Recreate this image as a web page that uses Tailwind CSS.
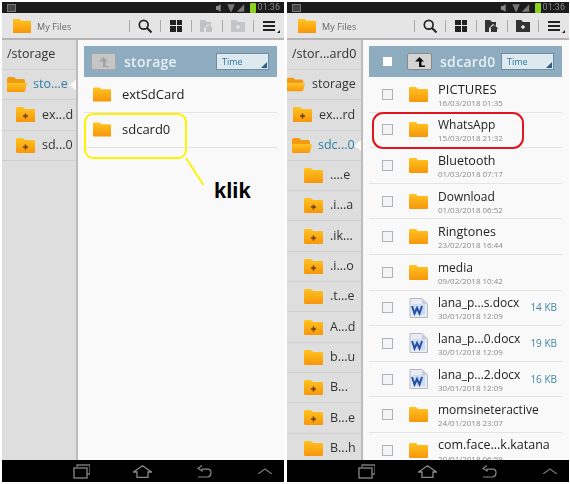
<!DOCTYPE html>
<html><head><meta charset="utf-8"><script src="https://cdn.jsdelivr.net/npm/@tailwindcss/browser@4"></script></head>
<body class="bg-white">
<svg width="0" height="0" class="absolute">
<defs>
<linearGradient id="g" x1="0" y1="0" x2="0" y2="1"><stop offset="0" stop-color="#ffc421"/><stop offset="1" stop-color="#f7960a"/></linearGradient>
<symbol id="f" viewBox="0 0 19 15"><path d="M0 1 Q0 0 1 0H7L9 2H18Q19 2 19 3V14Q19 15 18 15H1Q0 15 0 14Z" fill="url(#g)"/></symbol>
<symbol id="fp" viewBox="0 0 19 15"><path d="M0 1 Q0 0 1 0H7L9 2H18Q19 2 19 3V14Q19 15 18 15H1Q0 15 0 14Z" fill="url(#g)"/><path d="M7 9H12M9.500 6.500V11.500" stroke="#6b3f00" stroke-width="1.500"/></symbol>
<symbol id="fo" viewBox="0 0 20 15"><path d="M0 1.500 Q0 0 2 0H7L9 2H16Q18 2 18 4V6H0Z" fill="#f39a12"/><path d="M0 6H20L18 14Q18 15 16 15H1Q0 15 0 14Z" fill="url(#g)"/></symbol>
<symbol id="w" viewBox="0 0 19 20"><path d="M1 0.500H13L18.500 6V19.500H1Z" fill="#e9ecf2" stroke="#b4b9c4"/><path d="M13 0.500V6H18.500" fill="#c4ccda"/><rect x="4" y="6" width="12" height="11" fill="#cddcf2"/><path d="M3 8L5.500 15.500L8 10L10.500 15.500L13 8" fill="none" stroke="#2450a8" stroke-width="2"/></symbol>
<symbol id="rec" viewBox="0 0 17 15"><path d="M4 3V1H17V10H14" fill="none" stroke="#777" stroke-width="1.300"/><rect x="1" y="4" width="13" height="10" fill="none" stroke="#777" stroke-width="1.500"/></symbol>
<symbol id="hm" viewBox="0 0 19 13"><path d="M0.500 7L9.500 0.800L18.500 7H15V12.500H4V7Z" fill="none" stroke="#888" stroke-width="1.300"/></symbol>
<symbol id="bk" viewBox="0 0 15 13"><path d="M5 0.500L1 3.500L5 6V4.200H11Q14 4.200 14 7.700T11 12H1" fill="none" stroke="#888" stroke-width="1.200"/></symbol>
<symbol id="up" viewBox="0 0 14 6"><path d="M0 6L7 1L14 6" fill="none" stroke="#777" stroke-width="1.200"/></symbol>
<symbol id="status" viewBox="0 0 36 10"><path d="M1 3H3L6 1V9L3 7H1ZM7 3L11 7M11 3L7 7" fill="#8a8a8a"/><path d="M13 1H21L17.500 9H16.500Z" fill="#777"/><path d="M23 9L31 9V1Z" fill="#777"/></symbol>
</defs>
</svg>
<div class="relative w-[570px] h-[484px] overflow-hidden flex gap-[3px] pl-[2px] pt-[2px] font-['Open_Sans',sans-serif]">

<!-- LEFT PHONE -->
<section class="w-[282px] h-[480px] flex flex-col overflow-hidden blur-[0.5px]">
 <div class="h-[11px] shrink-0 bg-[#1b1b1b] flex items-center pl-[5px] pr-[4px]">
  <div class="w-[9px] h-[8px] border border-[#777] bg-[#444]"></div>
  <svg class="ml-auto w-[34px] h-[10px]"><use href="#status"/></svg>
  <div class="w-[6px] h-[10px] ml-[1px] bg-[#8fd21b] rounded-[1px]"></div>
  <span class="ml-[2px] text-[9px] leading-none text-[#8a8a8a] font-['Roboto',sans-serif]">01:36</span>
 </div>
 <div class="h-[27px] shrink-0 bg-[#e5e5e5] border-b-2 border-[#b5b5b5] flex items-center">
  <svg class="ml-[11px] w-[18px] h-[16px]" preserveAspectRatio="none"><use href="#f"/></svg>
  <span class="ml-[6px] pt-[2px] w-[92px] text-[9px] tracking-[0.1px] text-[#666]">My Files</span>
  <div class="w-px h-[12px] bg-[#aaa]"></div>
  <div class="w-[30px] flex justify-center"><svg width="14" height="14" viewBox="0 0 14 14"><circle cx="5.700" cy="5.700" r="4.400" fill="none" stroke="#222" stroke-width="1.700"/><path d="M9 9L13.500 13.500" stroke="#222" stroke-width="2"/></svg></div>
  <div class="w-px h-[12px] bg-[#aaa]"></div>
  <div class="w-[30px] flex justify-center"><div class="grid grid-cols-2 gap-[1px] w-[12px] h-[12px]"><i class="bg-[#222]"></i><i class="bg-[#222]"></i><i class="bg-[#222]"></i><i class="bg-[#222]"></i></div></div>
  <div class="w-px h-[12px] bg-[#aaa]"></div>
  <div class="w-[30px] flex justify-center"><svg width="14" height="12" viewBox="0 0 14 12"><path d="M0 0H5L7 2H11V6L8 4L4 8V12H0Z M5 8L9 5L13.500 8.500H12V12H6V8.500Z" fill="#bfc3c6"/></svg></div>
  <div class="w-px h-[12px] bg-[#aaa]"></div>
  <div class="w-[30px] flex justify-center"><svg width="14" height="12" viewBox="0 0 14 12"><path d="M0 0H5L7 2H14V12H0Z" fill="#c2c6c9"/><path d="M5 7H9M7 5V9" stroke="#e5e5e5" stroke-width="1.500"/></svg></div>
  <div class="w-px h-[12px] bg-[#aaa]"></div>
  <div class="relative w-[29px] flex justify-center"><div class="flex flex-col gap-[2px] w-[12px]"><i class="h-[2px] bg-[#222]"></i><i class="h-[2px] bg-[#222]"></i><i class="h-[2px] bg-[#222]"></i></div><i class="absolute right-[3px] bottom-[-2px] w-0 h-0 border-l-[3px] border-l-transparent border-b-[3px] border-b-[#222]"></i></div>
 </div>
 <div class="flex-1 min-h-0 flex overflow-hidden">
  <aside class="w-[76px] shrink-0 bg-[#dedede] border-r-2 border-[#bdbdbd] text-[12.500px] text-[#333] overflow-hidden">
   <div class="h-[30px] flex items-center pl-[5px] border-b border-[#cfcfcf]">/storage</div>
   <div class="relative h-[30.300px] flex items-center pl-[5px] border-b border-[#cfcfcf] text-[#2d7fa6]"><svg class="w-[20px] h-[15px] mr-[6px]"><use href="#fo"/></svg>sto...e<i class="absolute right-[-1px] top-[9px] w-[8px] h-[12px] bg-[#f9f9f9] [clip-path:polygon(100%_0,0_50%,100%_100%)]"></i></div>
   <div class="h-[30.300px] flex items-center pl-[14px] border-b border-[#cfcfcf]"><svg class="w-[19px] h-[15px] mr-[7px]"><use href="#fp"/></svg>ex...d</div>
   <div class="h-[30.300px] flex items-center pl-[14px] border-b border-[#cfcfcf]"><svg class="w-[19px] h-[15px] mr-[7px]"><use href="#fp"/></svg>sd...0</div>
  </aside>
  <main class="flex-1 min-w-0 bg-[#f9f9f9] pl-[6px] pr-[7px] pt-[6px]">
   <div class="h-[31px] bg-[#8eacc0] flex items-center pl-[7px] pr-[8px]">
    <div class="w-[25px] h-[17px] bg-[#c6c6c6] border border-[#a8a8a8] rounded-[2px] flex justify-center items-center"><svg width="11" height="10" viewBox="0 0 11 10"><path d="M5.500 0L10 4.500H7.500V9H11V10H5V4.500H1Z" fill="#a3a3a3"/></svg></div>
    <span class="ml-[8px] text-[14px] font-semibold text-[#e8f0f4] tracking-[0.3px]">storage</span>
    <div class="relative ml-auto w-[53px] h-[17px] bg-[#dde8ef] border border-[#6f8da3] text-[9px] leading-[15px] pl-[5px] text-[#2f78a8]">Time<i class="absolute right-[1px] bottom-[1px] w-0 h-0 border-l-[6px] border-l-transparent border-b-[6px] border-b-[#2a5f8a]"></i></div>
   </div>
   <div class="h-[35.600px] flex items-center pl-[9px] border-b border-[#e4e4e4]"><svg class="w-[18px] h-[15px] mr-[11px]"><use href="#f"/></svg><span class="text-[13px] text-[#222]">extSdCard</span></div>
   <div class="h-[35.600px] flex items-center pl-[9px] border-b border-[#e4e4e4]"><svg class="w-[18px] h-[15px] mr-[11px]"><use href="#f"/></svg><span class="text-[13px] text-[#222]">sdcard0</span></div>
  </main>
 </div>
 <nav class="h-[22px] shrink-0 bg-black relative flex items-center">
  <svg class="ml-[71px] w-[17px] h-[15px]"><use href="#rec"/></svg>
  <svg class="ml-[43px] w-[19px] h-[13px]"><use href="#hm"/></svg>
  <svg class="ml-[45px] w-[15px] h-[13px]"><use href="#bk"/></svg>
  <svg class="ml-[46px] w-[14px] h-[6px]"><use href="#up"/></svg>
 </nav>
</section>

<!-- RIGHT PHONE -->
<section class="w-[282px] h-[480px] flex flex-col overflow-hidden blur-[0.5px]">
 <div class="h-[11px] shrink-0 bg-[#1b1b1b] flex items-center pl-[5px] pr-[4px]">
  <div class="w-[9px] h-[8px] border border-[#777] bg-[#444]"></div>
  <svg class="ml-auto w-[34px] h-[10px]"><use href="#status"/></svg>
  <div class="w-[6px] h-[10px] ml-[1px] bg-[#8fd21b] rounded-[1px]"></div>
  <span class="ml-[2px] text-[9px] leading-none text-[#8a8a8a] font-['Roboto',sans-serif]">01:36</span>
 </div>
 <div class="h-[27px] shrink-0 bg-[#e5e5e5] border-b-2 border-[#b5b5b5] flex items-center">
  <svg class="ml-[11px] w-[18px] h-[16px]" preserveAspectRatio="none"><use href="#f"/></svg>
  <span class="ml-[6px] pt-[2px] w-[92px] text-[9px] tracking-[0.1px] text-[#666]">My Files</span>
  <div class="w-px h-[12px] bg-[#aaa]"></div>
  <div class="w-[30px] flex justify-center"><svg width="14" height="14" viewBox="0 0 14 14"><circle cx="5.700" cy="5.700" r="4.400" fill="none" stroke="#222" stroke-width="1.700"/><path d="M9 9L13.500 13.500" stroke="#222" stroke-width="2"/></svg></div>
  <div class="w-px h-[12px] bg-[#aaa]"></div>
  <div class="w-[30px] flex justify-center"><div class="grid grid-cols-2 gap-[1px] w-[12px] h-[12px]"><i class="bg-[#222]"></i><i class="bg-[#222]"></i><i class="bg-[#222]"></i><i class="bg-[#222]"></i></div></div>
  <div class="w-px h-[12px] bg-[#aaa]"></div>
  <div class="w-[30px] flex justify-center"><svg width="14" height="12" viewBox="0 0 14 12"><path d="M0 0H5L7 2H11V6L8 4L4 8V12H0Z M5 8L9 5L13.500 8.500H12V12H6V8.500Z" fill="#333"/></svg></div>
  <div class="w-px h-[12px] bg-[#aaa]"></div>
  <div class="w-[30px] flex justify-center"><svg width="14" height="12" viewBox="0 0 14 12"><path d="M0 0H5L7 2H14V12H0Z" fill="#333"/><path d="M5 7H9M7 5V9" stroke="#e5e5e5" stroke-width="1.500"/></svg></div>
  <div class="w-px h-[12px] bg-[#aaa]"></div>
  <div class="relative w-[29px] flex justify-center"><div class="flex flex-col gap-[2px] w-[12px]"><i class="h-[2px] bg-[#222]"></i><i class="h-[2px] bg-[#222]"></i><i class="h-[2px] bg-[#222]"></i></div><i class="absolute right-[3px] bottom-[-2px] w-0 h-0 border-l-[3px] border-l-transparent border-b-[3px] border-b-[#222]"></i></div>
 </div>
 <div class="flex-1 min-h-0 flex overflow-hidden">
  <aside class="w-[76px] shrink-0 bg-[#dedede] border-r-2 border-[#bdbdbd] text-[12.500px] text-[#333] overflow-hidden">
   <div class="h-[30px] flex items-center pl-[5px] border-b border-[#cfcfcf] whitespace-nowrap">/stor...ard0</div>
   <div class="h-[30.300px] flex items-center border-b border-[#cfcfcf]"><svg class="w-[18px] h-[15px] mr-[7px] shrink-0"><use href="#fo"/></svg>storage</div>
   <div class="h-[30.300px] flex items-center pl-[6px] border-b border-[#cfcfcf]"><svg class="w-[19px] h-[15px] mr-[7px]"><use href="#fp"/></svg>ex...rd</div>
   <div class="relative h-[30.300px] flex items-center pl-[5px] border-b border-[#cfcfcf] text-[#2d7fa6]"><svg class="w-[20px] h-[15px] mr-[6px]"><use href="#fo"/></svg>sdc...0<i class="absolute right-[-1px] top-[9px] w-[8px] h-[12px] bg-[#f9f9f9] [clip-path:polygon(100%_0,0_50%,100%_100%)]"></i></div>
   <div class="h-[30.300px] flex items-center pl-[17px] border-b border-[#cfcfcf]"><svg class="w-[19px] h-[15px] mr-[7px]"><use href="#f"/></svg>....e</div>
   <div class="h-[30.300px] flex items-center pl-[17px] border-b border-[#cfcfcf]"><svg class="w-[19px] h-[15px] mr-[7px]"><use href="#fp"/></svg>.i...a</div>
   <div class="h-[30.300px] flex items-center pl-[17px] border-b border-[#cfcfcf]"><svg class="w-[19px] h-[15px] mr-[7px]"><use href="#fp"/></svg>.ik...</div>
   <div class="h-[30.300px] flex items-center pl-[17px] border-b border-[#cfcfcf]"><svg class="w-[19px] h-[15px] mr-[7px]"><use href="#fp"/></svg>.i...o</div>
   <div class="h-[30.300px] flex items-center pl-[17px] border-b border-[#cfcfcf]"><svg class="w-[19px] h-[15px] mr-[7px]"><use href="#f"/></svg>.t...e</div>
   <div class="h-[30.300px] flex items-center pl-[17px] border-b border-[#cfcfcf]"><svg class="w-[19px] h-[15px] mr-[7px]"><use href="#fp"/></svg>A...d</div>
   <div class="h-[30.300px] flex items-center pl-[17px] border-b border-[#cfcfcf]"><svg class="w-[19px] h-[15px] mr-[7px]"><use href="#f"/></svg>b...u</div>
   <div class="h-[30.300px] flex items-center pl-[17px] border-b border-[#cfcfcf]"><svg class="w-[19px] h-[15px] mr-[7px]"><use href="#fp"/></svg>B...</div>
   <div class="h-[30.300px] flex items-center pl-[17px] border-b border-[#cfcfcf]"><svg class="w-[19px] h-[15px] mr-[7px]"><use href="#fp"/></svg>B...e</div>
   <div class="h-[30.300px] flex items-center pl-[17px] border-b border-[#cfcfcf]"><svg class="w-[19px] h-[15px] mr-[7px]"><use href="#f"/></svg>B...h</div>
  </aside>
  <main class="flex-1 min-w-0 bg-[#f9f9f9] pl-[6px] pr-[7px] pt-[6px] overflow-hidden">
   <div class="h-[31px] bg-[#8eacc0] flex items-center pl-[13px] pr-[8px]">
    <div class="w-[11px] h-[11px] bg-white border border-[#9aa9b4]"></div>
    <div class="ml-[14px] w-[25px] h-[17px] bg-[#d4d4d4] border border-[#8a8a8a] rounded-[2px] flex justify-center items-center"><svg width="11" height="10" viewBox="0 0 11 10"><path d="M5.500 0L10 4.500H7.500V8.500H11V10H5V4.500H1Z" fill="#111"/></svg></div>
    <span class="ml-[8px] text-[14px] font-semibold text-[#e8f0f4] tracking-[0.3px]">sdcard0</span>
    <div class="relative ml-auto w-[53px] h-[17px] bg-[#dde8ef] border border-[#6f8da3] text-[9px] leading-[15px] pl-[5px] text-[#2f78a8]">Time<i class="absolute right-[1px] bottom-[1px] w-0 h-0 border-l-[6px] border-l-transparent border-b-[6px] border-b-[#2a5f8a]"></i></div>
   </div>
   <div class="h-[35.600px] flex items-center pl-[13px] border-b border-[#e4e4e4]"><i class="w-[11px] h-[11px] border border-[#aab4bc] bg-[#f4f4f4] mr-[16px]"></i><svg class="w-[19px] h-[15px] mr-[10px]"><use href="#f"/></svg><div class="leading-none pt-[2px]"><div class="text-[13px] text-[#222] mb-[3px]">PICTURES</div><div class="text-[8px] text-[#8a8a8a]">16/03/2018 01:35</div></div></div>
   <div class="h-[35.600px] flex items-center pl-[13px] border-b border-[#e4e4e4]"><i class="w-[11px] h-[11px] border border-[#aab4bc] bg-[#f4f4f4] mr-[16px]"></i><svg class="w-[19px] h-[15px] mr-[10px]"><use href="#f"/></svg><div class="leading-none pt-[2px]"><div class="text-[12px] text-[#222] mb-[3px]">WhatsApp</div><div class="text-[8px] text-[#8a8a8a]">15/03/2018 21:32</div></div></div>
   <div class="h-[35.600px] flex items-center pl-[13px] border-b border-[#e4e4e4]"><i class="w-[11px] h-[11px] border border-[#aab4bc] bg-[#f4f4f4] mr-[16px]"></i><svg class="w-[19px] h-[15px] mr-[10px]"><use href="#f"/></svg><div class="leading-none pt-[2px]"><div class="text-[12.500px] text-[#222] mb-[3px]">Bluetooth</div><div class="text-[8px] text-[#8a8a8a]">01/03/2018 07:17</div></div></div>
   <div class="h-[35.600px] flex items-center pl-[13px] border-b border-[#e4e4e4]"><i class="w-[11px] h-[11px] border border-[#aab4bc] bg-[#f4f4f4] mr-[16px]"></i><svg class="w-[19px] h-[15px] mr-[10px]"><use href="#f"/></svg><div class="leading-none pt-[2px]"><div class="text-[12px] text-[#222] mb-[3px]">Download</div><div class="text-[8px] text-[#8a8a8a]">01/03/2018 06:52</div></div></div>
   <div class="h-[35.600px] flex items-center pl-[13px] border-b border-[#e4e4e4]"><i class="w-[11px] h-[11px] border border-[#aab4bc] bg-[#f4f4f4] mr-[16px]"></i><svg class="w-[19px] h-[15px] mr-[10px]"><use href="#f"/></svg><div class="leading-none pt-[2px]"><div class="text-[12.500px] text-[#222] mb-[3px]">Ringtones</div><div class="text-[8px] text-[#8a8a8a]">23/02/2018 16:44</div></div></div>
   <div class="h-[35.600px] flex items-center pl-[13px] border-b border-[#e4e4e4]"><i class="w-[11px] h-[11px] border border-[#aab4bc] bg-[#f4f4f4] mr-[16px]"></i><svg class="w-[19px] h-[15px] mr-[10px]"><use href="#f"/></svg><div class="leading-none pt-[2px]"><div class="text-[12px] text-[#222] mb-[3px]">media</div><div class="text-[8px] text-[#8a8a8a]">09/02/2018 10:42</div></div></div>
   <div class="h-[35.600px] flex items-center pl-[13px] border-b border-[#e4e4e4]"><i class="w-[11px] h-[11px] shrink-0 border border-[#aab4bc] bg-[#f4f4f4] mr-[16px]"></i><svg class="w-[19px] h-[20px] mr-[10px] shrink-0"><use href="#w"/></svg><div class="leading-none pt-[2px] whitespace-nowrap"><div class="text-[12px] text-[#222] mb-[3px]">lana_p...s.docx</div><div class="text-[8px] text-[#8a8a8a]">30/01/2018 12:09</div></div><span class="ml-auto mr-[5px] text-[10px] text-[#3f86a8] whitespace-nowrap">14 KB</span></div>
   <div class="h-[35.600px] flex items-center pl-[13px] border-b border-[#e4e4e4]"><i class="w-[11px] h-[11px] shrink-0 border border-[#aab4bc] bg-[#f4f4f4] mr-[16px]"></i><svg class="w-[19px] h-[20px] mr-[10px] shrink-0"><use href="#w"/></svg><div class="leading-none pt-[2px] whitespace-nowrap"><div class="text-[12px] text-[#222] mb-[3px]">lana_p...0.docx</div><div class="text-[8px] text-[#8a8a8a]">30/01/2018 12:09</div></div><span class="ml-auto mr-[5px] text-[10px] text-[#3f86a8] whitespace-nowrap">19 KB</span></div>
   <div class="h-[35.600px] flex items-center pl-[13px] border-b border-[#e4e4e4]"><i class="w-[11px] h-[11px] shrink-0 border border-[#aab4bc] bg-[#f4f4f4] mr-[16px]"></i><svg class="w-[19px] h-[20px] mr-[10px] shrink-0"><use href="#w"/></svg><div class="leading-none pt-[2px] whitespace-nowrap"><div class="text-[12px] text-[#222] mb-[3px]">lana_p...2.docx</div><div class="text-[8px] text-[#8a8a8a]">30/01/2018 12:09</div></div><span class="ml-auto mr-[5px] text-[10px] text-[#3f86a8] whitespace-nowrap">16 KB</span></div>
   <div class="h-[35.600px] flex items-center pl-[13px] border-b border-[#e4e4e4]"><i class="w-[11px] h-[11px] border border-[#aab4bc] bg-[#f4f4f4] mr-[16px]"></i><svg class="w-[19px] h-[15px] mr-[10px]"><use href="#f"/></svg><div class="leading-none pt-[2px]"><div class="text-[12px] text-[#222] mb-[3px]">momsineteractive</div><div class="text-[8px] text-[#8a8a8a]">24/01/2018 23:07</div></div></div>
   <div class="h-[35.600px] flex items-center pl-[13px] border-b border-[#e4e4e4]"><i class="w-[11px] h-[11px] border border-[#aab4bc] bg-[#f4f4f4] mr-[16px]"></i><svg class="w-[19px] h-[15px] mr-[10px]"><use href="#f"/></svg><div class="leading-none pt-[2px]"><div class="text-[12.500px] text-[#222] mb-[3px]">com.face...k.katana</div><div class="text-[8px] text-[#8a8a8a]">20/01/2018 06:59</div></div></div>
  </main>
 </div>
 <nav class="h-[22px] shrink-0 bg-black relative flex items-center">
  <svg class="ml-[71px] w-[17px] h-[15px]"><use href="#rec"/></svg>
  <svg class="ml-[43px] w-[19px] h-[13px]"><use href="#hm"/></svg>
  <svg class="ml-[45px] w-[15px] h-[13px]"><use href="#bk"/></svg>
  <svg class="ml-[46px] w-[14px] h-[6px]"><use href="#up"/></svg>
 </nav>
</section>

<!-- annotations -->
<div class="absolute left-[84px] top-[113px] w-[103px] h-[46px] border-2 border-[#fff200] rounded-[9px]"></div>
<svg class="absolute left-[183px] top-[155px]" width="24" height="32" viewBox="0 0 24 32"><path d="M3 3L20.500 30" stroke="#fff200" stroke-width="2"/></svg>
<div class="absolute left-[214px] top-[177px] text-[22px] leading-[28px] font-bold text-black font-['Liberation_Sans',sans-serif]">klik</div>
<div class="absolute left-[372px] top-[112px] w-[152px] h-[37px] border-2 border-[#e0141e] rounded-[11px]"></div>
</div>
</body></html>
